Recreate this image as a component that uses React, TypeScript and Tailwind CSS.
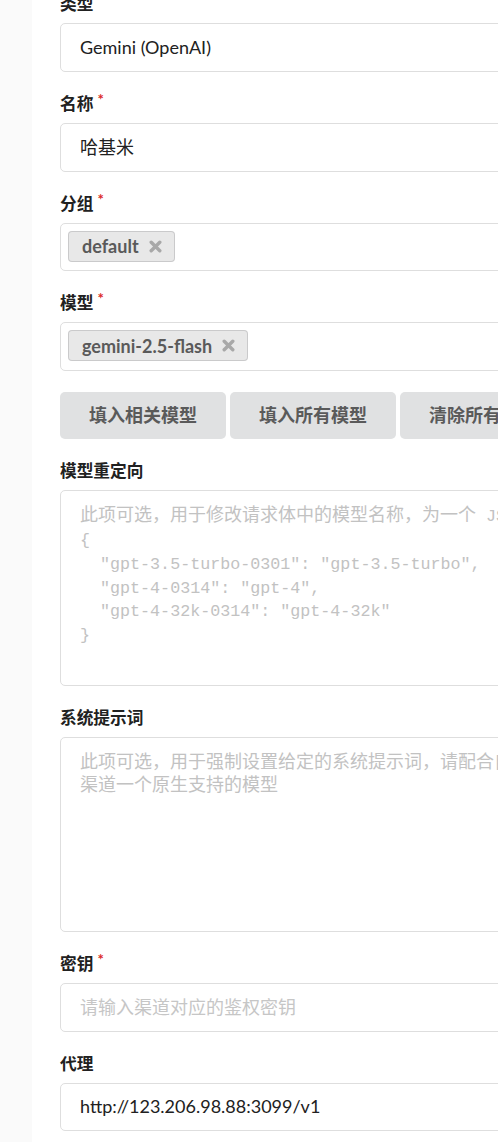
import React from "react";

const Star = () => (
  <span className="relative top-[-5px] ml-[4px] text-[15px] font-bold leading-none text-[#db2828]">*</span>
);

const Label = ({ text, req }: { text: string; req?: boolean }) => (
  <div className="mb-[8px] h-[22px] text-[16.7px] font-bold leading-[22px] text-[#212121] whitespace-nowrap">
    {text}
    {req && <Star />}
  </div>
);

const XIcon = () => (
  <svg width="13" height="13" viewBox="0 0 13 13" className="ml-[10px] shrink-0">
    <path d="M2.2 2.2 L10.8 10.8 M10.8 2.2 L2.2 10.8" stroke="#a8a8a8" strokeWidth="3.4" strokeLinecap="round" />
  </svg>
);

const Tag = ({ text }: { text: string }) => (
  <div className="flex h-[31px] items-center rounded-[4px] bg-[#e8e8e8] pl-[14px] pr-[13px] text-[18px] font-bold text-[#5a5a5a] shadow-[inset_0_0_0_1px_rgba(34,36,38,0.15)]">
    <span className="leading-none">{text}</span>
    <XIcon />
  </div>
);

const TextInput = ({ value, placeholder, h = "h-[48.6px]" }: { value?: string; placeholder?: string; h?: string }) => (
  <div
    className={`flex ${h} items-center rounded-[5px] border border-[#dedede] bg-white px-[19px] text-[18px] whitespace-nowrap ${
      value ? "text-[#212121]" : "text-[#c6c6c6]"
    }`}
  >
    {value ?? placeholder}
  </div>
);

const Btn = ({ text }: { text: string }) => (
  <div className="flex h-[47.6px] w-[166px] shrink-0 items-center justify-center rounded-[5px] bg-[#e0e1e2] text-[18px] font-bold text-[#5a5a5a] whitespace-nowrap">
    {text}
  </div>
);

export default function App() {
  return (
    <div className="flex h-[1142px] w-[498px] overflow-hidden bg-white font-[Lato,'Noto_Sans_CJK_SC',sans-serif]">
      <div className="w-[32px] shrink-0 bg-[#fafafa]" />
      <div className="w-[640px] shrink-0 pl-[28px]">
        <div className="mt-[-6.7px] flex flex-col">
          <div className="mb-[21px]">
            <Label text="类型" />
            <TextInput value="Gemini (OpenAI)" />
          </div>
          <div className="mb-[21px]">
            <Label text="名称" req />
            <TextInput value="哈基米" />
          </div>
          <div className="mb-[21px]">
            <Label text="分组" req />
            <div className="flex h-[48.6px] items-start rounded-[5px] border border-[#dedede] bg-white pl-[7px] pt-[7px]">
              <Tag text="default" />
            </div>
          </div>
          <div className="mb-[21px]">
            <Label text="模型" req />
            <div className="flex h-[48.6px] items-start rounded-[5px] border border-[#dedede] bg-white pl-[7px] pt-[7px]">
              <Tag text="gemini-2.5-flash" />
            </div>
          </div>
          <div className="mb-[21px] flex gap-[4px]">
            <Btn text="填入相关模型" />
            <Btn text="填入所有模型" />
            <Btn text="清除所有模型" />
          </div>
          <div className="mb-[21px]">
            <Label text="模型重定向" />
            <div className="h-[195.4px] overflow-hidden rounded-[5px] border border-[#dedede] bg-white px-[19px] pt-[12px] leading-[23.8px] text-[#c2c2c2]">
              <div className="whitespace-pre text-[18px]">
                此项可选，用于修改请求体中的模型名称，为一个
                <span className="font-['Liberation_Mono',monospace] text-[16.7px]"> JSON 文本，键为请求中的模型名称，值为要替换的模型名称，例如：</span>
              </div>
              <div className="whitespace-pre font-['Liberation_Mono',monospace] text-[16.7px]">
                {"{\n  \"gpt-3.5-turbo-0301\": \"gpt-3.5-turbo\",\n  \"gpt-4-0314\": \"gpt-4\",\n  \"gpt-4-32k-0314\": \"gpt-4-32k\"\n}"}
              </div>
            </div>
          </div>
          <div className="mb-[21px]">
            <Label text="系统提示词" />
            <div className="h-[195.4px] overflow-hidden rounded-[5px] border border-[#dedede] bg-white px-[19px] pt-[12px] text-[18px] leading-[23.8px] text-[#c2c2c2]">
              <div className="whitespace-pre">此项可选，用于强制设置给定的系统提示词，请配合自定义模型 & 模型重定向使用，首先创建一个唯一的</div>
              <div className="whitespace-pre">渠道一个原生支持的模型</div>
            </div>
          </div>
          <div className="mb-[21px]">
            <Label text="密钥" req />
            <TextInput placeholder="请输入渠道对应的鉴权密钥" />
          </div>
          <div className="mb-[21px]">
            <Label text="代理" />
            <TextInput value="http://123.206.98.88:3099/v1" />
          </div>
        </div>
      </div>
    </div>
  );
}
